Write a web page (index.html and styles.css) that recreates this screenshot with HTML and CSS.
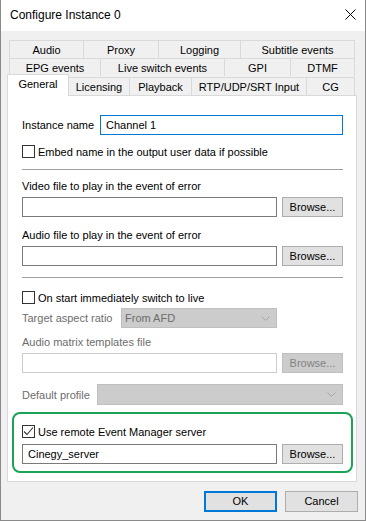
FILE: index.html
```html
<!DOCTYPE html>
<html>
<head>
<meta charset="utf-8">
<link rel="stylesheet" href="styles.css">
</head>
<body>
<div class="window">
  <div class="titlebar">
    <span class="title">Configure Instance 0</span>
    <svg class="close" width="11" height="11" viewBox="0 0 11 11"><path d="M0.5 0.5 L10.5 10.5 M10.5 0.5 L0.5 10.5" stroke="#000" stroke-width="1" fill="none"/></svg>
  </div>
  <div class="client">
    <div class="tabs">
      <div class="tabrow r1">
        <div class="tab">Audio</div>
        <div class="tab">Proxy</div>
        <div class="tab">Logging</div>
        <div class="tab last">Subtitle events</div>
      </div>
      <div class="tabrow r2">
        <div class="tab">EPG events</div>
        <div class="tab">Live switch events</div>
        <div class="tab">GPI</div>
        <div class="tab last">DTMF</div>
      </div>
      <div class="tabrow r3">
        <div class="tab sel">General</div>
        <div class="tab">Licensing</div>
        <div class="tab">Playback</div>
        <div class="tab">RTP/UDP/SRT Input</div>
        <div class="tab last">CG</div>
      </div>
    </div>
    <div class="panel">
      <div class="row namerow">
        <span class="lbl-name">Instance name</span>
        <div class="input focus">Channel 1</div>
      </div>
      <div class="check chk-embed">
        <span class="box"></span><span>Embed name in the output user data if possible</span>
      </div>
      <div class="sep sep1"></div>
      <div class="label lab-video">Video file to play in the event of error</div>
      <div class="row filerow fr-video">
        <div class="input file"></div>
        <div class="btn browse">Browse...</div>
      </div>
      <div class="label lab-audio">Audio file to play in the event of error</div>
      <div class="row filerow fr-audio">
        <div class="input file"></div>
        <div class="btn browse">Browse...</div>
      </div>
      <div class="sep sep2"></div>
      <div class="check chk-live">
        <span class="box"></span><span>On start immediately switch to live</span>
      </div>
      <div class="row aspectrow disabled">
        <span class="lbl-aspect">Target aspect ratio</span>
        <div class="combo aspect-combo"><span>From AFD</span>
          <svg class="chev" width="9" height="5" viewBox="0 0 9 5"><path d="M0.5 0.5 L4.5 4.5 L8.5 0.5" stroke="#a6a6a6" fill="none"/></svg>
        </div>
      </div>
      <div class="label disabled lab-matrix">Audio matrix templates file</div>
      <div class="row filerow fr-matrix disabled">
        <div class="input file dis"></div>
        <div class="btn browse dis">Browse...</div>
      </div>
      <div class="row profilerow disabled">
        <span class="lbl-profile">Default profile</span>
        <div class="combo profile-combo"><span></span>
          <svg class="chev" width="9" height="5" viewBox="0 0 9 5"><path d="M0.5 0.5 L4.5 4.5 L8.5 0.5" stroke="#a6a6a6" fill="none"/></svg>
        </div>
      </div>
      <div class="highlight">
        <div class="check chk-remote">
          <span class="box checked"><svg width="11" height="11" viewBox="0 0 11 11"><path d="M1 5.5 L4 8.5 L10 1.5" stroke="#333" stroke-width="1.1" fill="none"/></svg></span><span>Use remote Event Manager server</span>
        </div>
        <div class="row filerow fr-remote">
          <div class="input file">Cinegy_server</div>
          <div class="btn browse">Browse...</div>
        </div>
      </div>
    </div>
    <div class="buttons">
      <div class="btn dlg ok">OK</div>
      <div class="btn dlg">Cancel</div>
    </div>
  </div>
</div>
</body>
</html>
```

FILE: styles.css
```css
* { box-sizing: border-box; }
html, body { margin: 0; padding: 0; }
body {
  font-family: "Segoe UI", "Liberation Sans", Arial, sans-serif;
  font-size: 11px;
  color: #000;
  background: #fff;
}
.window {
  width: 366px;
  height: 521px;
  border: 1px solid #8a8a8a;
  border-top: none;
  display: flex;
  flex-direction: column;
  background: #f0f0f0;
}
.titlebar {
  height: 31px;
  background: #fff;
  display: flex;
  align-items: center;
  padding-left: 9px;
  padding-right: 9px;
  justify-content: space-between;
}
.title { font-size: 12px; margin-top: -1px; }
.close { margin-top: -2px; margin-right: 0; }
.client {
  flex: 1;
  padding-top: 9px;
  display: flex;
  flex-direction: column;
}
.tabs {
  margin-left: 8px;
  width: 346px;
}
.tabrow {
  display: grid;
  height: 18px;
}
.r1 { grid-template-columns: 74px 75px 82px 1fr; }
.r2 { grid-template-columns: 91px 124px 66px 1fr; }
.r3 { grid-template-columns: 59px 61px 62px 115px 1fr; height: 19px; align-items: start; }
.tab {
  height: 18px;
  border-top: 1px solid #d9d9d9;
  border-left: 1px solid #d9d9d9;
  background: #f0f0f0;
  text-align: center;
  line-height: 18px;
  white-space: nowrap;
}
.tab.last { border-right: 1px solid #d9d9d9; }
.r3 .tab { margin-top: 1px; }
.r3 .tab.sel {
  position: relative;
  z-index: 2;
  margin-top: -2px;
  margin-left: -2px;
  margin-right: -1px;
  height: 22px;
  background: #fff;
  border-right: 1px solid #d9d9d9;
  line-height: 18px;
}
.panel {
  margin-left: 6px;
  width: 350px;
  height: 387px;
  background: #fff;
  border: 1px solid #d9d9d9;
  padding: 0 13px 0 14px;
  display: flex;
  flex-direction: column;
}
.row { display: flex; align-items: center; }
.namerow { margin-top: 19px; height: 20px; }
.lbl-name { width: 78px; }
.input {
  height: 20px;
  border: 1px solid #7a7a7a;
  background: #fff;
  padding-left: 5px;
  line-height: 18px;
  white-space: nowrap;
}
.namerow .input { flex: 1; }
.input.focus { border-color: #0078d7; }
.check {
  display: flex;
  align-items: center;
  height: 13px;
  white-space: nowrap;
}
.box {
  width: 13px;
  height: 13px;
  border: 1px solid #333;
  background: #fff;
  margin-right: 3px;
  display: flex;
  align-items: center;
  justify-content: center;
  flex: none;
}
.chk-embed { margin-top: 10px; }
.sep { height: 1px; background: #a0a0a0; }
.sep1 { margin-top: 11px; }
.label { height: 15px; line-height: 15px; }
.lab-video { margin-top: 9px; }
.filerow { height: 20px; gap: 5px; }
.filerow .input.file { width: 255px; }
.fr-video { margin-top: 3px; }
.lab-audio { margin-top: 11px; }
.fr-audio { margin-top: 3px; }
.sep2 { margin-top: 11px; }
.chk-live { margin-top: 13px; }
.btn {
  background: #e1e1e1;
  border: 1px solid #adadad;
  text-align: center;
  height: 20px;
  line-height: 18px;
}
.browse { width: 61px; }
.disabled { color: #6d6d6d; }
.aspectrow { margin-top: 4px; height: 20px; }
.lbl-aspect { width: 99px; }
.combo {
  height: 20px;
  background: #cccccc;
  border: 1px solid #bfbfbf;
  display: flex;
  align-items: center;
  justify-content: space-between;
  padding: 0 6px 0 3px;
  color: #6d6d6d;
}
.aspect-combo { width: 156px; }
.lab-matrix { margin-top: 7px; }
.fr-matrix { margin-top: 3px; }
.input.dis { border-color: #cccccc; }
.btn.dis { background: #cccccc; border-color: #bfbfbf; color: #838383; }
.profilerow { margin-top: 11px; height: 21px; }
.lbl-profile { width: 75px; }
.profile-combo { flex: 1; height: 21px; }
.highlight {
  margin: 7px -10px 0 -10px;
  height: 61px;
  border: 2px solid #1ba355;
  border-radius: 8px;
  padding: 11px 8px 0 8px;
}
.fr-remote { margin-top: 6px; }
.buttons {
  display: flex;
  justify-content: flex-end;
  gap: 8px;
  margin-top: 9px;
  padding-right: 7px;
}
.dlg { width: 73px; height: 21px; line-height: 19px; }
.dlg.ok { border: 2px solid #0078d7; line-height: 17px; }
```
